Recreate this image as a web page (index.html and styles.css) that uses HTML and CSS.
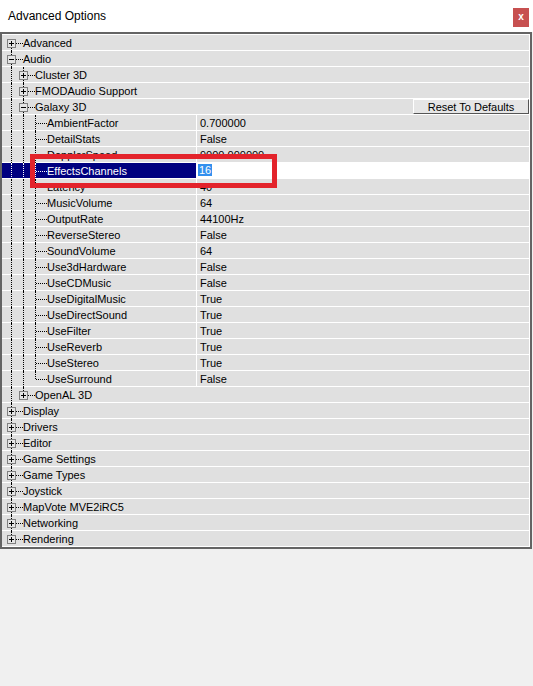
FILE: index.html
```html
<!DOCTYPE html>
<html lang="en">
<head>
  <meta charset="UTF-8" />
  <title>Advanced Options</title>
  <link rel="stylesheet" href="styles.css">
</head>
<body>
  <div class="titlebar">
    <span class="title">Advanced Options</span>
    <span class="close">x</span>
  </div>
  <div class="panel">
    <div class="tree">
      <div class="row cat"><div class="name"><span class="node first"><i class="box plus"></i></span><span class="label">Advanced</span></div></div>
      <div class="row cat"><div class="name"><span class="node"><i class="box"></i></span><span class="label">Audio</span></div></div>
      <div class="row cat"><div class="name"><span class="g"></span><span class="node"><i class="box plus"></i></span><span class="label">Cluster 3D</span></div></div>
      <div class="row cat"><div class="name"><span class="g"></span><span class="node"><i class="box plus"></i></span><span class="label">FMODAudio Support</span></div></div>
      <div class="row cat"><div class="name"><span class="g"></span><span class="node"><i class="box"></i></span><span class="label">Galaxy 3D</span></div><button class="reset">Reset To Defaults</button></div>

      <div class="row"><div class="name"><span class="g"></span><span class="g"></span><span class="node"></span><span class="label">AmbientFactor</span></div><div class="val">0.700000</div></div>
      <div class="row"><div class="name"><span class="g"></span><span class="g"></span><span class="node"></span><span class="label">DetailStats</span></div><div class="val">False</div></div>
      <div class="row"><div class="name"><span class="g"></span><span class="g"></span><span class="node"></span><span class="label">DopplerSpeed</span></div><div class="val">9000.000000</div></div>
      <div class="row sel"><div class="name"><span class="g"></span><span class="g"></span><span class="node"></span><span class="label">EffectsChannels</span></div><div class="val"><span class="hl">16</span></div></div>
      <div class="row"><div class="name"><span class="g"></span><span class="g"></span><span class="node"></span><span class="label">Latency</span></div><div class="val">40</div></div>
      <div class="row"><div class="name"><span class="g"></span><span class="g"></span><span class="node"></span><span class="label">MusicVolume</span></div><div class="val">64</div></div>
      <div class="row"><div class="name"><span class="g"></span><span class="g"></span><span class="node"></span><span class="label">OutputRate</span></div><div class="val">44100Hz</div></div>
      <div class="row"><div class="name"><span class="g"></span><span class="g"></span><span class="node"></span><span class="label">ReverseStereo</span></div><div class="val">False</div></div>
      <div class="row"><div class="name"><span class="g"></span><span class="g"></span><span class="node"></span><span class="label">SoundVolume</span></div><div class="val">64</div></div>
      <div class="row"><div class="name"><span class="g"></span><span class="g"></span><span class="node"></span><span class="label">Use3dHardware</span></div><div class="val">False</div></div>
      <div class="row"><div class="name"><span class="g"></span><span class="g"></span><span class="node"></span><span class="label">UseCDMusic</span></div><div class="val">False</div></div>
      <div class="row"><div class="name"><span class="g"></span><span class="g"></span><span class="node"></span><span class="label">UseDigitalMusic</span></div><div class="val">True</div></div>
      <div class="row"><div class="name"><span class="g"></span><span class="g"></span><span class="node"></span><span class="label">UseDirectSound</span></div><div class="val">True</div></div>
      <div class="row"><div class="name"><span class="g"></span><span class="g"></span><span class="node"></span><span class="label">UseFilter</span></div><div class="val">True</div></div>
      <div class="row"><div class="name"><span class="g"></span><span class="g"></span><span class="node"></span><span class="label">UseReverb</span></div><div class="val">True</div></div>
      <div class="row"><div class="name"><span class="g"></span><span class="g"></span><span class="node"></span><span class="label">UseStereo</span></div><div class="val">True</div></div>
      <div class="row"><div class="name"><span class="g"></span><span class="g"></span><span class="node last"></span><span class="label">UseSurround</span></div><div class="val">False</div></div>

      <div class="row cat"><div class="name"><span class="g"></span><span class="node last"><i class="box plus"></i></span><span class="label">OpenAL 3D</span></div></div>
      <div class="row cat"><div class="name"><span class="node"><i class="box plus"></i></span><span class="label">Display</span></div></div>
      <div class="row cat"><div class="name"><span class="node"><i class="box plus"></i></span><span class="label">Drivers</span></div></div>
      <div class="row cat"><div class="name"><span class="node"><i class="box plus"></i></span><span class="label">Editor</span></div></div>
      <div class="row cat"><div class="name"><span class="node"><i class="box plus"></i></span><span class="label">Game Settings</span></div></div>
      <div class="row cat"><div class="name"><span class="node"><i class="box plus"></i></span><span class="label">Game Types</span></div></div>
      <div class="row cat"><div class="name"><span class="node"><i class="box plus"></i></span><span class="label">Joystick</span></div></div>
      <div class="row cat"><div class="name"><span class="node"><i class="box plus"></i></span><span class="label">MapVote MVE2iRC5</span></div></div>
      <div class="row cat"><div class="name"><span class="node"><i class="box plus"></i></span><span class="label">Networking</span></div></div>
      <div class="row cat"><div class="name"><span class="node last"><i class="box plus"></i></span><span class="label">Rendering</span></div></div>
    </div>
  </div>
  <div class="mark"></div>
</body>
</html>
```

FILE: styles.css
```css
body {
  margin: 0;
  background-color: #f0f0f0;
  font-family: "Liberation Sans", Arial, sans-serif;
  font-size: 11px;
  color: #000;
}

.titlebar {
  height: 32px;
  background-color: #fff;
  display: flex;
  align-items: center;
  padding-left: 8px;
}

.title {
  font-size: 12px;
}

.close {
  align-self: flex-start;
  margin: 8px 4px 0 auto;
  width: 16px;
  height: 19px;
  background-color: #c75050;
  color: #fff;
  font-weight: bold;
  font-size: 10px;
  line-height: 18px;
  text-align: center;
}

.panel {
  width: 532px;
  box-sizing: border-box;
  border: 2px solid #646464;
  background-color: #e0e0e0;
}

.tree {
  border-top: 1px solid #fff;
  border-right: 1px solid #fff;
}

.row {
  display: flex;
  height: 16px;
  box-shadow: inset 0 -1px 0 #fff;
  line-height: 16px;
}

.name {
  width: 194px;
  flex: none;
  display: flex;
  padding-left: 3px;
  box-sizing: border-box;
  height: 16px;
}

.cat .name {
  flex: 1;
}

.g, .node {
  position: relative;
  flex: none;
  width: 12px;
  height: 16px;
}

.node {
  width: 18px;
}

/* dotted tree lines */
.g::before, .node::before {
  content: "";
  position: absolute;
  left: 6px;
  top: 0;
  bottom: 0;
  border-left: 1px dotted #000;
}

.node.first::before {
  top: 8px;
}

.node.last::before {
  bottom: 8px;
}

.node::after {
  content: "";
  position: absolute;
  left: 7px;
  width: 11px;
  top: 8px;
  border-top: 1px dotted #000;
}

.box {
  position: absolute;
  left: 2px;
  top: 4px;
  width: 9px;
  height: 9px;
  box-sizing: border-box;
  border: 1px solid #808080;
  background-color: #e4e4e4;
  z-index: 1;
}

.box::before {
  content: "";
  position: absolute;
  left: 1px;
  top: 3px;
  width: 5px;
  height: 1px;
  background-color: #000;
}

.box.plus::after {
  content: "";
  position: absolute;
  left: 3px;
  top: 1px;
  width: 1px;
  height: 5px;
  background-color: #000;
}

.label {
  white-space: nowrap;
}

.val {
  flex: 1;
  height: 15px;
  border-left: 1px solid #fff;
  padding-left: 3px;
  white-space: nowrap;
}

.sel .name {
  background-color: #000080;
  color: #fff;
  height: 15px;
}

.sel .g::before,
.sel .node::before,
.sel .node::after {
  border-color: #fff;
}

.sel .val {
  background-color: #fff;
  padding-left: 1px;
  line-height: 15px;
}

.hl {
  background-color: #3390ee;
  color: #fff;
  padding: 0 1px;
}

.reset {
  width: 116px;
  height: 15px;
  padding: 0;
  margin: 0;
  font-family: "Liberation Sans", Arial, sans-serif;
  font-size: 11px;
  line-height: 12px;
  background-color: #e6e6e6;
  border: 1px solid;
  border-color: #fff #555 #555 #fff;
  color: #000;
}

/* red annotation box over the edited row */
.mark {
  position: absolute;
  left: 30px;
  top: 154px;
  width: 247px;
  height: 34px;
  box-sizing: border-box;
  border: 5px solid #e3232b;
}
```
